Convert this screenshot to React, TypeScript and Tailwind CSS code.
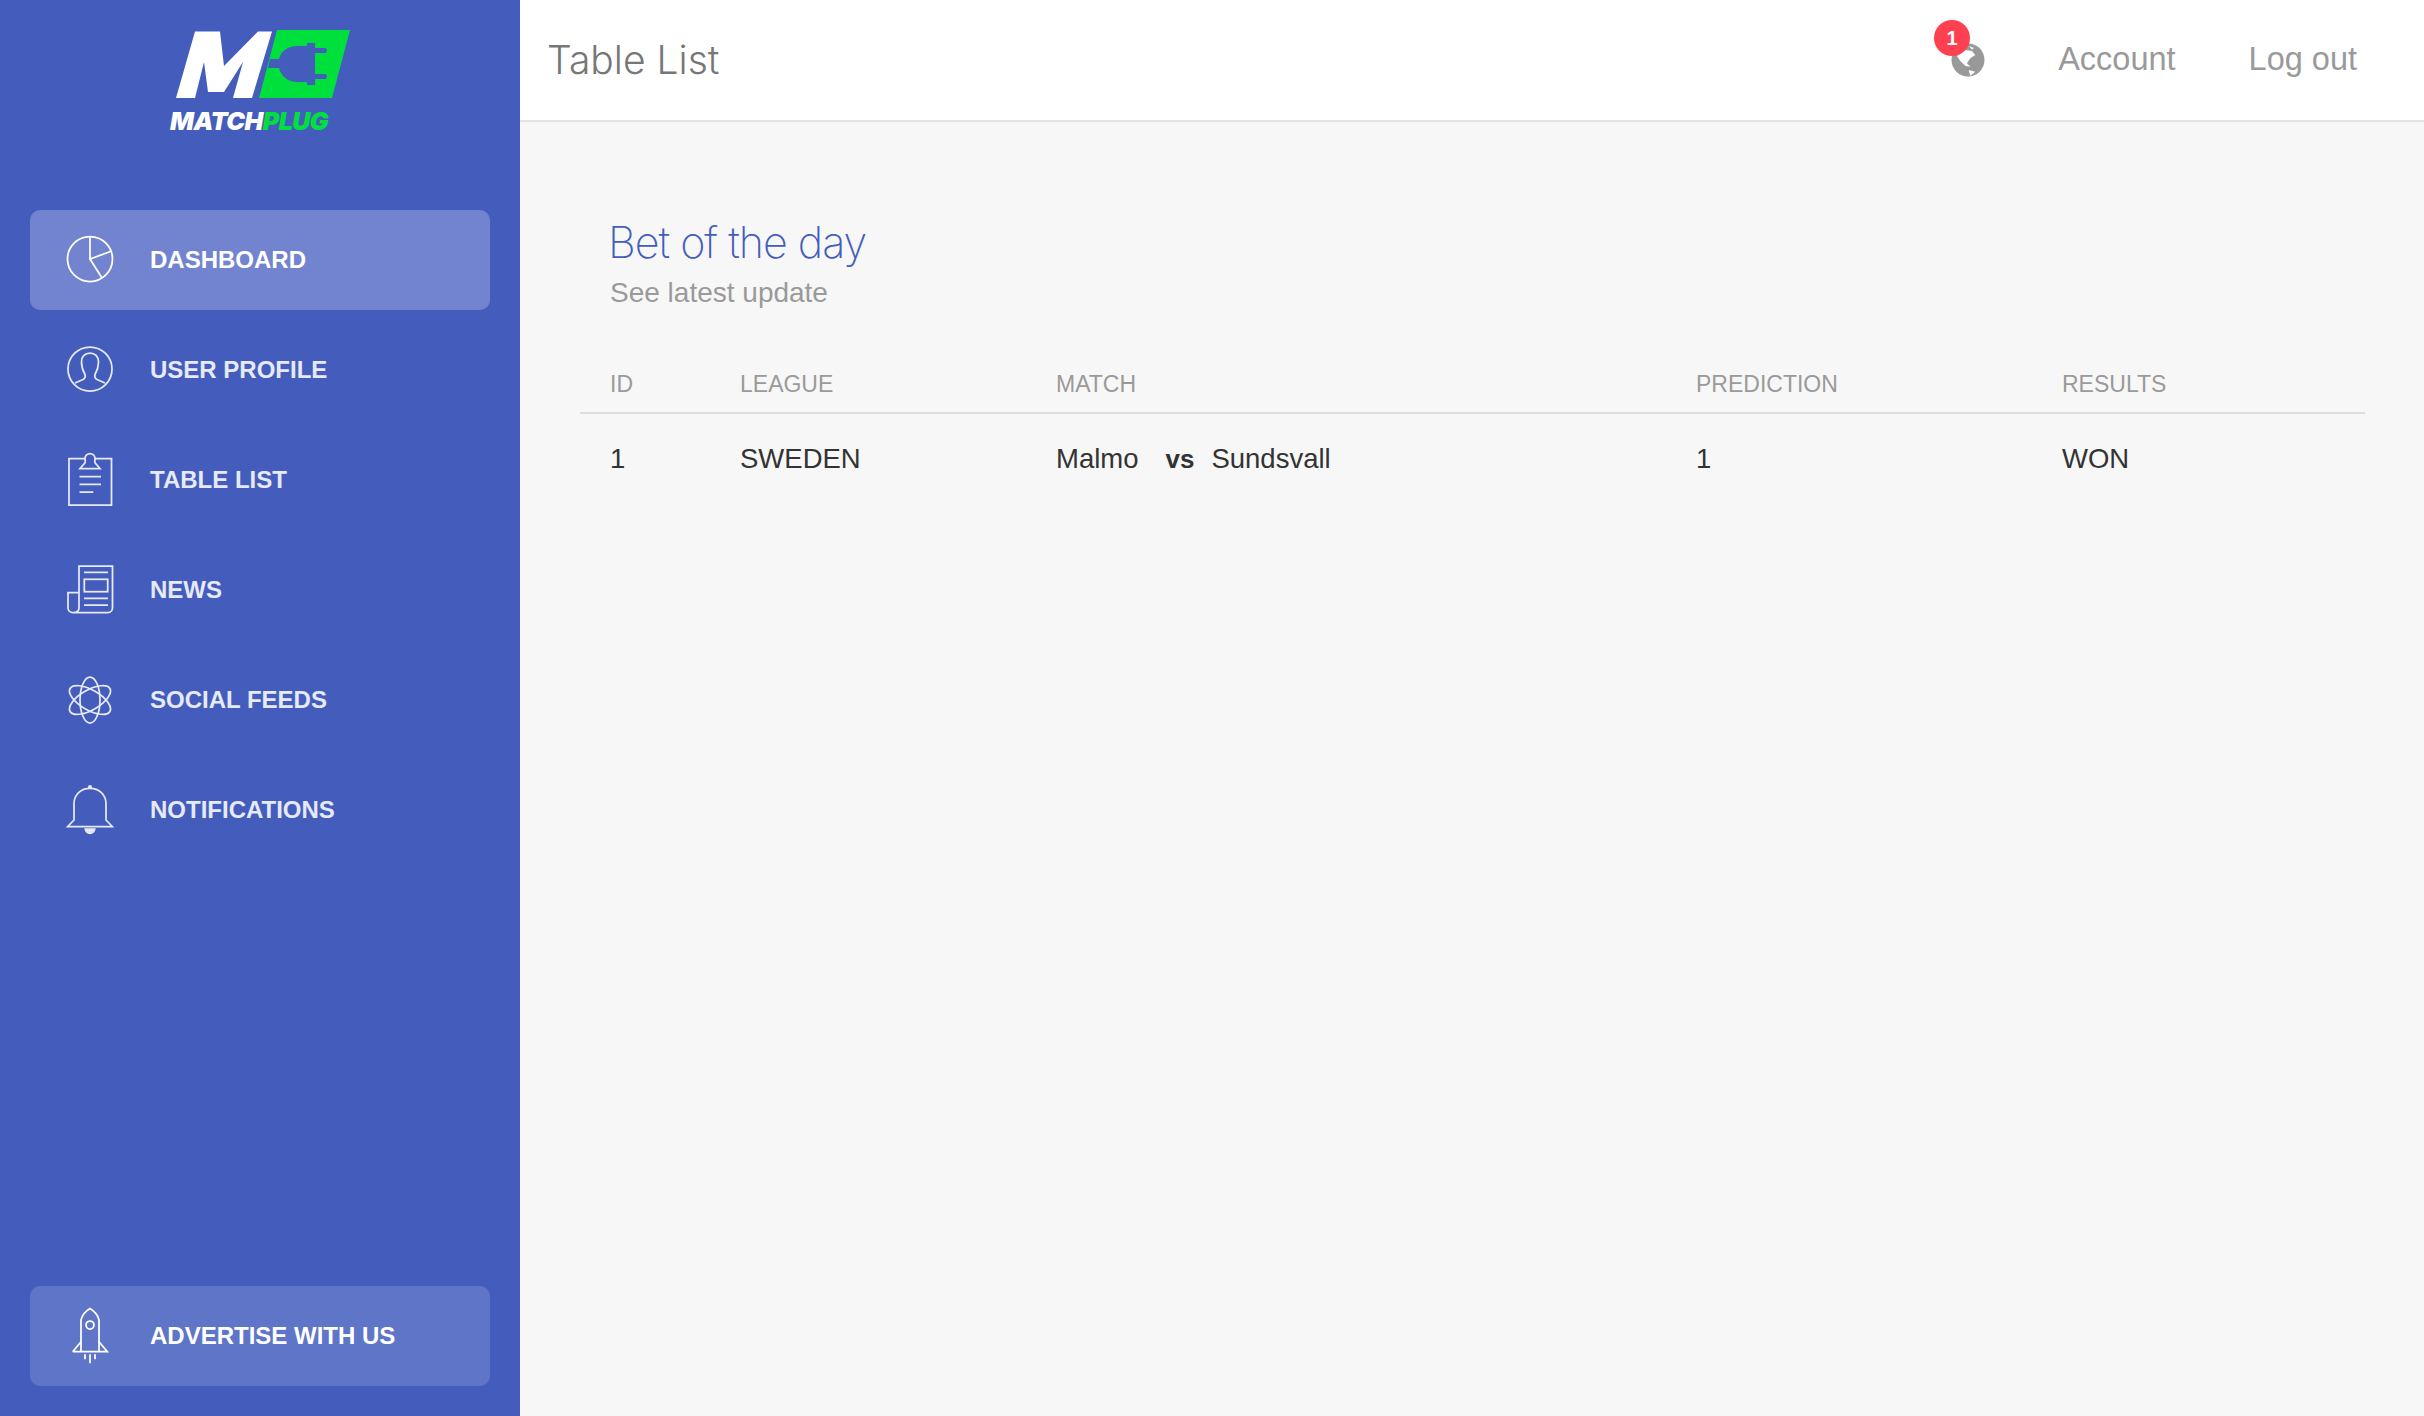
import React from "react";

const iconProps = {
  width: 52,
  height: 52,
  viewBox: "0 0 52 52",
  fill: "none",
  stroke: "currentColor",
  strokeWidth: 1.75,
  className: "overflow-visible",
};

const PieIcon = () => (
  <svg {...iconProps}>
    <circle cx="26" cy="25" r="22.5" />
    <path d="M26 2.500V25L46.500 17.500M26 25L38 44" />
  </svg>
);

const UserIcon = () => (
  <svg {...iconProps}>
    <circle cx="26" cy="25" r="22" />
    <path d="M11 39L19 35.500C21 34.500 21.500 32.500 21 30.500C19 27 17.500 23 17.500 18C17.500 12.500 21 9 26 9C31 9 34.500 12.500 34.500 18C34.500 23 33 27 31 30.500C30.500 32.500 31 34.500 33 35.500L41 39" />
  </svg>
);

const ClipboardIcon = () => (
  <svg {...iconProps}>
    <path d="M21 4.500H5V51H47.500V4.500H31" />
    <path d="M16 14.500L21 8.700C21.500 7 21 5 21 4.500C21 1.500 23.500 -0.500 26 -0.500C28.500 -0.500 31 1.500 31 4.500C31 5 30.500 7 31 8.700L36 14.500Z" />
    <path d="M15.500 22.700H37M15.500 30.300H37M15.500 38H29.300" />
  </svg>
);

const NewsIcon = () => (
  <svg {...iconProps}>
    <path d="M9 48.500H44C46.500 48.500 48.500 46.500 48.500 44V2H15V44C15 46.500 13 48.500 9 48.500C6 48.500 4 46.500 4 44V28.700H15" />
    <path d="M20 8.300H44M20 34.300H44M20 41H44" />
    <rect x="20.300" y="15.300" width="23.400" height="12.400" />
  </svg>
);

const AtomIcon = () => (
  <svg {...iconProps}>
    <ellipse cx="26" cy="26" rx="10" ry="23" />
    <ellipse cx="26" cy="26" rx="10" ry="23" transform="rotate(60 26 26)" />
    <ellipse cx="26" cy="26" rx="10" ry="23" transform="rotate(120 26 26)" />
  </svg>
);

const BellIcon = () => (
  <svg {...iconProps}>
    <path d="M10 19.500C10 10.500 17 4.300 26 4.300C35 4.300 42 10.500 42 19.500V36L48.300 42.500H3.700L10 36Z" />
    <path d="M21.300 45.200H30.700C30.200 47.800 28.300 49.300 26 49.300C23.700 49.300 21.800 47.800 21.300 45.200Z" fill="currentColor" />
    <circle cx="26" cy="3" r="2" fill="currentColor" stroke="none" />
  </svg>
);

const RocketIcon = () => (
  <svg {...iconProps}>
    <path d="M17 41.700V10C18 5 22 1 26 -1.500C30 1 34 5 35 10V41.700" />
    <circle cx="26" cy="15" r="4" />
    <path d="M8.700 41.700H43.300L35 31.700M8.700 41.700L17 31.700" />
    <path d="M21 44.300V49.300M26 44.300V53.300M31 44.300V49.300" />
  </svg>
);

const Logo = () => (
  <div className="flex flex-col items-start pl-[140px]">
    <svg width="182" height="70" viewBox="0 0 182 70">
      <path fill="#ffffff" d="M6 68L25 1.500H50L54 36L88 1.500H102L82 68H63L73 32L54 62H38L34 32L25 68Z" />
      <path fill="#00e03c" d="M107 0H180L162 68H89Z" />
      <path fill="#445dbd" d="M100 29H109C111 21 118 16 127 16H137V13H145V18H155C157.500 18 157.500 23 155 23H145V44H155C157.500 44 157.500 49 155 49H145V55H137V52H127C118 52 111 46 109 38H98Z" />
    </svg>
    <div className="mt-[7px] text-[25px] leading-[28px] font-black italic tracking-[-0.5px] font-['Inter',sans-serif]">
      <span className="text-white">MATCH</span>
      <span className="text-[#00e03c]">PLUG</span>
    </div>
  </div>
);

const navItems = [
  { label: "DASHBOARD", icon: <PieIcon />, active: true },
  { label: "USER PROFILE", icon: <UserIcon /> },
  { label: "TABLE LIST", icon: <ClipboardIcon /> },
  { label: "NEWS", icon: <NewsIcon /> },
  { label: "SOCIAL FEEDS", icon: <AtomIcon /> },
  { label: "NOTIFICATIONS", icon: <BellIcon /> },
];

const Sidebar = () => (
  <aside className="w-[520px] shrink-0 bg-[#445dbd] flex flex-col px-[30px] pt-[30px] pb-[30px]">
    <Logo />
    <nav className="mt-[75px] flex flex-col gap-[10px]">
      {navItems.map((item) => (
        <a
          key={item.label}
          className={
            item.active
              ? "flex items-center h-[100px] pl-[34px] rounded-[10px] bg-[#7284d0] text-white"
              : "flex items-center h-[100px] pl-[34px] rounded-[10px] text-[#e6e9f6]"
          }
        >
          {item.icon}
          <span className="ml-[34px] text-[24px] font-bold">{item.label}</span>
        </a>
      ))}
    </nav>
    <a className="mt-auto flex items-center h-[100px] pl-[34px] rounded-[10px] bg-[#5f75c7] text-white">
      <RocketIcon />
      <span className="ml-[34px] text-[24px] font-bold">ADVERTISE WITH US</span>
    </a>
  </aside>
);

const Globe = () => (
  <div className="relative w-[34px] h-[34px]">
    <svg width="34" height="34" viewBox="0 0 34 34">
      <circle cx="17" cy="17" r="16.500" fill="#999999" />
      <path fill="#ffffff" d="M6 13L13.700 7L21 8L24.300 12L19.300 15.300L16 20.300L19.300 23.700L14.300 23L9.300 18Z" />
      <path fill="#ffffff" d="M17.700 27L24.300 28.700L19.300 32.700Z" />
      <path fill="#ffffff" d="M18 3L23 5L21 6.500Z" />
    </svg>
    <span className="absolute left-[-17px] top-[-23px] w-[36px] h-[36px] rounded-full bg-[#ff4050] text-white text-[20px] font-bold flex items-center justify-center">
      1
    </span>
  </div>
);

const Header = () => (
  <header className="h-[122px] shrink-0 bg-white border-b-2 border-[#e3e3e3] flex items-center pl-[27px] pr-[67px]">
    <h1 className="text-[39px] text-[#777777] font-['Inter'] font-light">Table List</h1>
    <div className="ml-auto flex items-center text-[32.5px] text-[#9a9a9a]">
      <Globe />
      <a className="ml-[73px] mb-[2px]">Account</a>
      <a className="ml-[73px] mb-[2px]">Log out</a>
    </div>
  </header>
);

const columns = ["ID", "LEAGUE", "MATCH", "PREDICTION", "RESULTS"];

const BetTable = () => (
  <table className="w-[1785px] table-fixed mt-[43px]">
    <colgroup>
      <col className="w-[160px]" />
      <col className="w-[316px]" />
      <col className="w-[640px]" />
      <col className="w-[366px]" />
      <col />
    </colgroup>
    <thead>
      <tr className="border-b-2 border-[#dddddd]">
        {columns.map((c, i) => (
          <th
            key={c}
            className={
              i === 0
                ? "pl-[30px] h-[57px] text-left text-[23px] font-normal text-[#9a9a9a]"
                : "h-[57px] text-left text-[23px] font-normal text-[#9a9a9a]"
            }
          >
            {c}
          </th>
        ))}
      </tr>
    </thead>
    <tbody className="text-[27.5px] text-[#333333]">
      <tr className="h-[90px]">
        <td className="pl-[30px]">1</td>
        <td>SWEDEN</td>
        <td>
          Malmo<b className="ml-[27px] mr-[17px] text-[26px]">vs</b>Sundsvall
        </td>
        <td>1</td>
        <td>WON</td>
      </tr>
    </tbody>
  </table>
);

export default function App() {
  return (
    <div className="flex h-screen bg-[#f7f7f7] font-['Liberation_Sans',sans-serif]">
      <Sidebar />
      <main className="flex-1 flex flex-col">
        <Header />
        <section className="pl-[60px] pt-[92px] flex-1">
          <div className="pl-[30px]">
            <h2 className="text-[43px] leading-[56px] -ml-[2px] tracking-[-1px] text-[#445dbd] font-['Inter'] font-extralight">Bet of the day</h2>
            <p className="text-[28px] leading-[40px] mt-[3px] text-[#9a9a9a]">See latest update</p>
          </div>
          <BetTable />
        </section>
      </main>
    </div>
  );
}
